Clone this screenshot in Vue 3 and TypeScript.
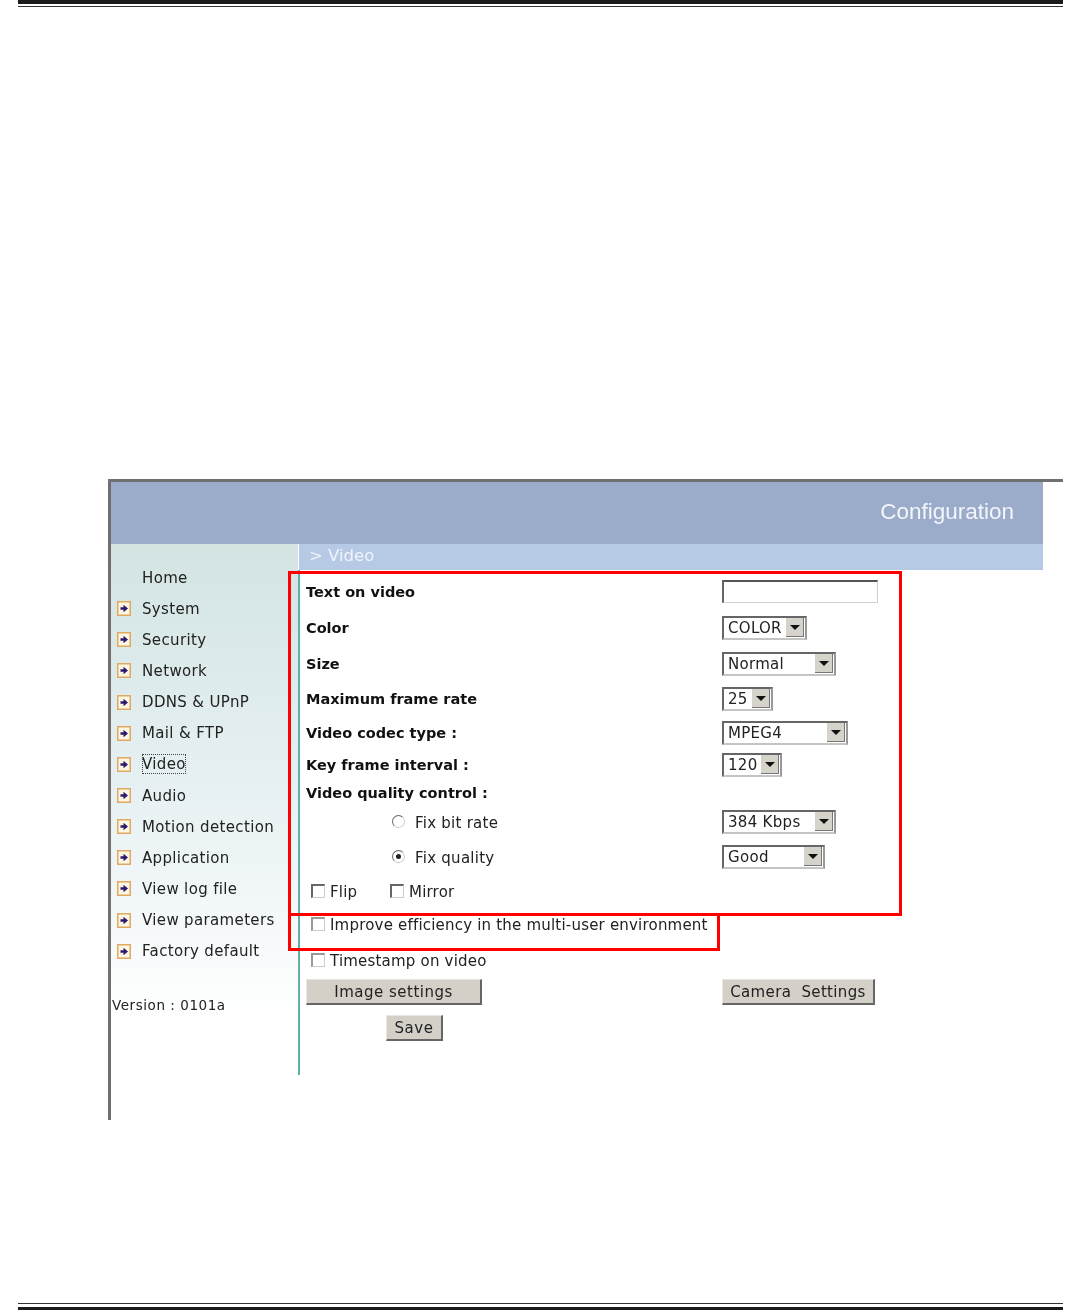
<template>
  <div class="page">
    <div class="rule rule-top"></div>

    <div class="shot">
      <div class="banner">Configuration</div>
      <div class="body">
        <nav class="menu">
          <div v-for="item in menu" :key="item" class="menu-item">
            <svg v-if="item !== 'Home'" class="bullet" viewBox="0 0 14 15" width="14" height="15">
              <rect x="0.75" y="0.75" width="12.5" height="13.5" fill="#fdf6e0" stroke="#e0a860" stroke-width="1.5" />
              <path d="M3.5 6.2h3V3.8L11 7.5l-4.500 3.700V8.800h-3z" fill="#2a1a70" />
            </svg>
            <span :class="{ focused: item === 'Video' }">{{ item }}</span>
          </div>
          <div class="version">Version : 0101a</div>
        </nav>

        <main class="main">
          <div class="crumb">&gt; Video</div>
          <form class="form" @submit.prevent>
            <div class="row r36"><b class="label">Text on video</b><div class="field"><div class="textbox"></div></div></div>
            <div class="row r36"><b class="label">Color</b><div class="field"><div class="select w85"><span>COLOR</span><i class="drop"></i></div></div></div>
            <div class="row r36"><b class="label">Size</b><div class="field"><div class="select w114"><span>Normal</span><i class="drop"></i></div></div></div>
            <div class="row r34"><b class="label">Maximum frame rate</b><div class="field"><div class="select w51"><span>25</span><i class="drop"></i></div></div></div>
            <div class="row r34"><b class="label">Video codec type :</b><div class="field"><div class="select w126"><span>MPEG4</span><i class="drop"></i></div></div></div>
            <div class="row r30"><b class="label">Key frame interval :</b><div class="field"><div class="select w60"><span>120</span><i class="drop"></i></div></div></div>
            <div class="row r26"><b class="label">Video quality control :</b></div>
            <div class="row r32">
              <div class="label radio-cell"><i class="radio"></i><span>Fix bit rate</span></div>
              <div class="field"><div class="select w114"><span>384 Kbps</span><i class="drop"></i></div></div>
            </div>
            <div class="row r38">
              <div class="label radio-cell"><i class="radio on"></i><span>Fix quality</span></div>
              <div class="field"><div class="select w103"><span>Good</span><i class="drop"></i></div></div>
            </div>
            <div class="row r32 checks">
              <label class="check flip"><i class="box"></i>Flip</label>
              <label class="check"><i class="box"></i>Mirror</label>
            </div>
            <div class="row r34 checks"><label class="check"><i class="box faint"></i>Improve efficiency in the multi-user environment</label></div>
            <div class="row r38 checks"><label class="check"><i class="box faint"></i>Timestamp on video</label></div>
            <div class="row r26">
              <div class="label"><div class="btn image-btn">Image settings</div></div>
              <div class="field"><div class="btn camera-btn">Camera&nbsp; Settings</div></div>
            </div>
            <div class="row r46"><div class="btn save-btn">Save</div></div>
          </form>
        </main>
      </div>
    </div>

    <div class="rule rule-bottom"></div>

    <div class="mark mark-a"></div>
    <div class="mark mark-b"></div>
  </div>
</template>

<script setup lang="ts">
const menu: string[] = [
  'Home',
  'System',
  'Security',
  'Network',
  'DDNS & UPnP',
  'Mail & FTP',
  'Video',
  'Audio',
  'Motion detection',
  'Application',
  'View log file',
  'View parameters',
  'Factory default'
]
</script>

<style>
html,
body {
  margin: 0;
  background: #fff;
}
</style>

<style scoped>
.page {
  position: relative;
  width: 1081px;
  height: 1310px;
  overflow: hidden;
  background: #fff;
  color: #222;
  font-family: "DejaVu Sans", Verdana, sans-serif;
  font-size: 15px;
  display: flex;
  flex-direction: column;
}

.rule {
  margin-left: 18px;
  width: 1045px;
  box-sizing: border-box;
  height: 7px;
}

.rule-top {
  border-top: 4px solid #1c1c1c;
  border-bottom: 1px solid #333;
}

.rule-bottom {
  margin-top: 183px;
  border-top: 1px solid #333;
  border-bottom: 3px solid #1c1c1c;
}

.shot {
  margin: 472px 18px 0 108px;
  height: 641px;
  box-sizing: border-box;
  border-top: 3px solid #707070;
  border-left: 3px solid #707070;
  filter: blur(0.45px);
}

.banner {
  width: 932px;
  height: 62px;
  box-sizing: border-box;
  padding: 18px 29px 0 0;
  background: #9aacca;
  color: #f2f5fa;
  font-family: "Liberation Sans", Arial, sans-serif;
  font-size: 22.500px;
  line-height: 24px;
  text-align: right;
}

.body {
  display: flex;
  width: 932px;
}

.menu {
  width: 187px;
  height: 530px;
  flex: none;
  padding-top: 18px;
  box-sizing: border-box;
  background: linear-gradient(#d3e4e3 0, #e6f0f2 45%, #fff 90%);
}

.menu-item {
  height: 31.150px;
  display: flex;
  align-items: center;
  padding-left: 31px;
  position: relative;
  line-height: 20px;
  letter-spacing: 0.35px;
}

.bullet {
  position: absolute;
  left: 6px;
  top: 8px;
}

.focused {
  outline: 1px dotted #444;
  outline-offset: -1px;
}

.version {
  margin-top: 28px;
  padding-left: 1px;
  font-size: 13.5px;
  line-height: 20px;
  letter-spacing: 0.55px;
}

.main {
  flex: 1;
  min-width: 0;
}

.crumb {
  height: 26px;
  margin-left: 1px;
  padding-left: 10px;
  background: #b6c9e5;
  color: #f0f4fa;
  font-size: 16.500px;
  line-height: 24px;
}

.form {
  box-sizing: border-box;
  height: 505px;
  padding-top: 4px;
  border-left: 2px solid #5fb0a8;
}

.row {
  display: flex;
  align-items: center;
}

.r26 { height: 26px; }
.r30 { height: 30px; }
.r32 { height: 32px; }
.r34 { height: 34px; }
.r36 { height: 36px; }
.r38 { height: 38px; }
.r46 { height: 46px; }

.label {
  width: 422px;
  flex: none;
  padding-left: 6px;
  box-sizing: border-box;
  font-size: 14.500px;
  color: #111;
}

.radio-cell {
  display: flex;
  align-items: center;
  padding-left: 92px;
  font-weight: normal;
  font-size: 15px;
  letter-spacing: 0.25px;
  color: #222;
  position: relative;
  top: 1px;
}

.radio {
  width: 13px;
  height: 13px;
  margin-right: 10px;
  margin-top: -3px;
  box-sizing: border-box;
  border: 1px solid #ccc;
  border-top-color: #666;
  border-left-color: #666;
  border-radius: 50%;
  background: #fff;
  position: relative;
}

.radio.on::after {
  content: "";
  position: absolute;
  left: 3px;
  top: 3px;
  width: 5px;
  height: 5px;
  border-radius: 50%;
  background: #222;
}

.field {
  flex: none;
  margin-top: -1px;
}

.textbox {
  width: 156px;
  height: 23px;
  box-sizing: border-box;
  border: 1px solid #d0d0d0;
  border-top: 2px solid #555;
  border-left: 2px solid #666;
  background: #fff;
}

.select {
  height: 24px;
  box-sizing: border-box;
  display: flex;
  align-items: center;
  justify-content: space-between;
  padding: 0 1px 0 4px;
  border: 2px solid #666;
  border-right-color: #999;
  border-bottom-color: #c4c4c4;
  background: #fff;
  font-size: 15px;
  letter-spacing: 0.3px;
}

.w51 { width: 51px; }
.w60 { width: 60px; }
.w85 { width: 85px; }
.w103 { width: 103px; }
.w114 { width: 114px; }
.w126 { width: 126px; }

.drop {
  width: 18px;
  height: 19px;
  box-sizing: border-box;
  flex: none;
  position: relative;
  background: #d6d3cb;
  border-right: 1px solid #777;
  border-bottom: 1px solid #777;
}

.drop::after {
  content: "";
  position: absolute;
  left: 4px;
  top: 7px;
  border-left: 5px solid transparent;
  border-right: 5px solid transparent;
  border-top: 5px solid #111;
}

.checks {
  padding-left: 11px;
}

.check {
  display: flex;
  align-items: center;
  font-size: 15px;
  letter-spacing: 0.2px;
}

.flip {
  width: 79px;
}

.box {
  width: 14px;
  height: 14px;
  box-sizing: border-box;
  margin: -3px 5px 0 0;
  border: 1px solid #ccc;
  border-top: 2px solid #666;
  border-left: 2px solid #666;
  background: #fff;
}

.box.faint {
  border-top-color: #999;
  border-left-color: #999;
}

.btn {
  height: 26px;
  margin-top: -2px;
  box-sizing: border-box;
  background: #d4d0c8;
  border-right: 2px solid #666;
  border-bottom: 2px solid #666;
  border-top: 1px solid #e8e6e0;
  border-left: 1px solid #e8e6e0;
  text-align: center;
  line-height: 24px;
  font-size: 15px;
  letter-spacing: 0.5px;
  color: #222;
}

.image-btn {
  width: 176px;
}

.camera-btn {
  width: 153px;
  letter-spacing: 0.35px;
}

.save-btn {
  width: 57px;
  margin-left: 86px;
}

.mark {
  position: absolute;
  box-sizing: border-box;
  border: 3px solid #f00;
}

.mark-a {
  left: 288px;
  top: 571px;
  width: 614px;
  height: 345px;
}

.mark-b {
  left: 288px;
  top: 913px;
  width: 432px;
  height: 38px;
}
</style>
